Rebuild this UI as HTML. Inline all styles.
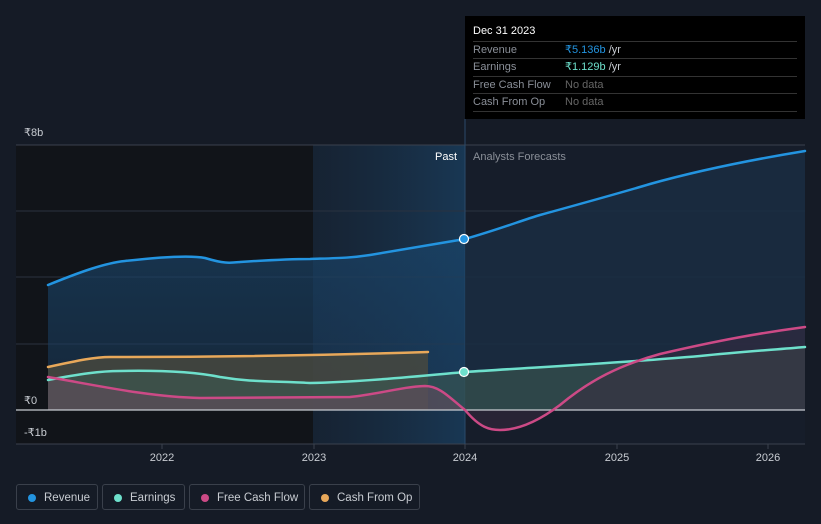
<!DOCTYPE html>
<html><head><meta charset="utf-8"><style>
html,body{margin:0;padding:0;background:#151b26;}
body{width:821px;height:524px;position:relative;overflow:hidden;font-family:"Liberation Sans",sans-serif;}
.tip{position:absolute;left:465px;top:16px;width:340px;height:103px;background:#000;}
.tip .h{position:absolute;left:8px;top:9px;color:#fff;font-size:11px;}
.row{position:absolute;left:8px;width:324px;height:17px;border-top:1px solid #333;font-size:11px;line-height:17px;color:#8a8f98;}
.row span{position:absolute;left:92px;}
.leg{position:absolute;top:484px;height:26px;border:1px solid #3a404b;border-radius:3px;color:#c8ccd2;font-size:11.5px;line-height:26px;box-sizing:border-box;}
.leg i{position:absolute;left:11px;top:9px;width:8px;height:8px;border-radius:50%;}
.leg b{font-weight:normal;position:absolute;left:27px;white-space:nowrap;}
</style></head><body>
<svg width="821" height="524" style="position:absolute;left:0;top:0">
<defs>
<linearGradient id="rv" x1="0" y1="0" x2="0" y2="1"><stop offset="0" stop-color="#1a4a72" stop-opacity=".75"/><stop offset="1" stop-color="#1a3a5a" stop-opacity=".5"/></linearGradient>
<linearGradient id="hl" x1="0" y1="0" x2="1" y2="0"><stop offset="0" stop-color="#1a3550" stop-opacity=".3"/><stop offset="1" stop-color="#1a4a72" stop-opacity=".6"/></linearGradient>
<clipPath id="pastc"><rect x="0" y="0" width="465" height="524"/></clipPath>
<clipPath id="futc"><rect x="465" y="0" width="400" height="524"/></clipPath>
</defs>
<rect x="16" y="145" width="297" height="299" fill="#111419"/>
<rect x="313" y="145" width="152" height="299" fill="url(#hl)"/>
<rect x="465" y="145" width="340" height="299" fill="#161d2a"/>
<g stroke="#2a3240" stroke-width="1">
<line x1="16" y1="145" x2="805" y2="145" stroke="#3a414d"/>
<line x1="16" y1="211" x2="805" y2="211"/>
<line x1="16" y1="277" x2="805" y2="277"/>
<line x1="16" y1="344" x2="805" y2="344"/>
<line x1="16" y1="444" x2="805" y2="444" stroke="#3a414d"/>
</g>
<line x1="465" y1="119" x2="465" y2="444" stroke="#2a4a6a"/>
<path clip-path="url(#pastc)" d="M48,285 C80,272 105,263 125,261 C160,257 190,255 205,258 C225,264 230,263 240,262 C270,260 290,259 310,259 C340,258 350,258 370,255 C400,250 430,245 465,239 C500,229 520,221 540,215 C580,204 620,193 650,184 C700,170 750,160 805,151 L805,410 L48,410Z" fill="url(#rv)"/>
<path clip-path="url(#futc)" d="M48,285 C80,272 105,263 125,261 C160,257 190,255 205,258 C225,264 230,263 240,262 C270,260 290,259 310,259 C340,258 350,258 370,255 C400,250 430,245 465,239 C500,229 520,221 540,215 C580,204 620,193 650,184 C700,170 750,160 805,151 L805,410 L48,410Z" fill="#1a2d42" fill-opacity=".85"/>
<path d="M48,367 C80,360 95,357 110,357 C200,357 300,356 428,352 L428,410 L48,410Z" fill="#4a4a3e" fill-opacity=".8"/>
<path d="M48,380 C80,374 100,371 120,371 C170,370 200,373 220,377 C250,382 270,381 310,383 C360,382 420,376 465,372 C540,367 620,363 700,356 C740,352 770,350 805,347 L805,410 L48,410Z" fill="#3c5a52" fill-opacity=".6"/>
<path d="M48,377 C100,386 150,397 200,398 L350,397 C380,394 400,387 425,386 C440,386 450,398 465,410 L48,410Z" fill="#6a4a60" fill-opacity=".5"/>
<path d="M465,410 C480,428 490,430 500,430 C520,430 540,420 560,405 C590,380 620,365 660,354 C720,340 760,333 805,327 L805,410Z" fill="#3a2a40" fill-opacity=".5"/>
<line x1="16" y1="410" x2="805" y2="410" stroke="#c8ccd2" stroke-width="1.2"/>
<g fill="none" stroke-width="2.5" stroke-linecap="round">
<path d="M48,285 C80,272 105,263 125,261 C160,257 190,255 205,258 C225,264 230,263 240,262 C270,260 290,259 310,259 C340,258 350,258 370,255 C400,250 430,245 465,239 C500,229 520,221 540,215 C580,204 620,193 650,184 C700,170 750,160 805,151" stroke="#2394e0"/>
<path d="M48,367 C80,360 95,357 110,357 C200,357 300,356 428,352" stroke="#e8a85a"/>
<path d="M48,380 C80,374 100,371 120,371 C170,370 200,373 220,377 C250,382 270,381 310,383 C360,382 420,376 465,372 C540,367 620,363 700,356 C740,352 770,350 805,347" stroke="#6ee0cc"/>
<path d="M48,377 C100,386 150,397 200,398 L350,397 C380,394 400,387 425,386 C440,386 450,398 465,410 C480,428 490,430 500,430 C520,430 540,420 560,405 C590,380 620,365 660,354 C720,340 760,333 805,327" stroke="#cc4a86"/>
</g>
<circle cx="464" cy="239" r="4.5" fill="#2394e0" stroke="#fff" stroke-width="1.2"/>
<circle cx="464" cy="372" r="4.5" fill="#6ee0cc" stroke="#fff" stroke-width="1.2"/>
<g fill="#c8ccd2" font-size="11" font-family="Liberation Sans, sans-serif">
<text x="24" y="136">₹8b</text>
<text x="24" y="404">₹0</text>
<text x="24" y="436">-₹1b</text>
<text x="162" y="461" text-anchor="middle">2022</text>
<text x="314" y="461" text-anchor="middle">2023</text>
<text x="465" y="461" text-anchor="middle">2024</text>
<text x="617" y="461" text-anchor="middle">2025</text>
<text x="768" y="461" text-anchor="middle">2026</text>
<text x="457" y="160" text-anchor="end" fill="#fff">Past</text>
<text x="473" y="160" fill="#8a8f98">Analysts Forecasts</text>
</g>
<g stroke="#3a414d"><line x1="162" y1="444" x2="162" y2="449"/><line x1="314" y1="444" x2="314" y2="449"/><line x1="465" y1="444" x2="465" y2="449"/><line x1="617" y1="444" x2="617" y2="449"/><line x1="768" y1="444" x2="768" y2="449"/></g>
</svg>
<div class="tip">
<div class="h">Dec 31 2023</div>
<div class="row" style="top:25px">Revenue<span style="color:#2394e0">₹5.136b <em style="font-style:normal;color:#c8ccd2">/yr</em></span></div>
<div class="row" style="top:42px">Earnings<span style="color:#6ee0cc">₹1.129b <em style="font-style:normal;color:#c8ccd2">/yr</em></span></div>
<div class="row" style="top:60px">Free Cash Flow<span style="color:#666">No data</span></div>
<div class="row" style="top:77px">Cash From Op<span style="color:#666">No data</span></div>
<div class="row" style="top:95px;height:0"></div>
</div>
<div class="leg" style="left:16px;width:82px"><i style="background:#2394e0"></i><b>Revenue</b></div>
<div class="leg" style="left:102px;width:83px"><i style="background:#6ee0cc"></i><b>Earnings</b></div>
<div class="leg" style="left:189px;width:116px"><i style="background:#cc4a86"></i><b>Free Cash Flow</b></div>
<div class="leg" style="left:309px;width:111px"><i style="background:#e8a85a"></i><b>Cash From Op</b></div>
</body></html>
